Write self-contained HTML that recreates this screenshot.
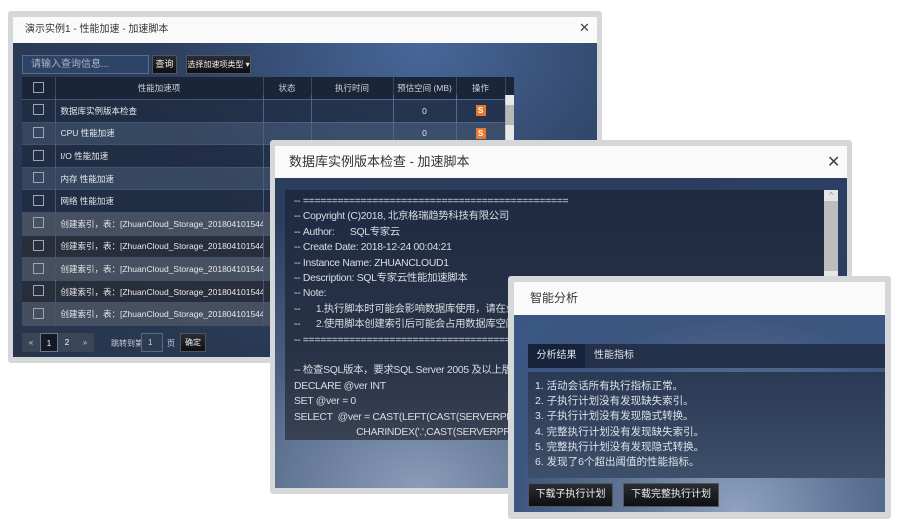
<!DOCTYPE html>
<html><head><meta charset="utf-8"><style>
*{margin:0;padding:0;box-sizing:border-box}
body{width:900px;height:530px;background:#fff;position:relative;overflow:hidden;font-family:"Liberation Sans","Noto Sans CJK SC",sans-serif}
.abs{position:absolute}
.win{position:absolute;background:#d6d7d9;border-radius:3px}
.hdr{position:absolute;background:#fafafa;color:#333}
.body{position:absolute;background:radial-gradient(ellipse at 70% 0%,#48679a 0%,#2c3f5e 45%,#27344a 100%)}
.x{position:absolute;color:#444;font-size:16px}
table{border-collapse:collapse;font-size:8.5px;color:#e6e9ee;table-layout:fixed}
td{height:22.6px;border-right:1px solid rgba(120,140,170,.35);border-bottom:1px solid rgba(120,140,170,.3);overflow:hidden;white-space:nowrap}
.cb{display:inline-block;width:11px;height:11px;border:1px solid #9aa6b6}
.s{display:inline-block;width:10px;height:11px;background:#e8782e;color:#fff;font-size:8px;font-weight:bold;line-height:11px;text-align:center}
.btn{position:absolute;background:linear-gradient(#2a2d33,#0d0f12);color:#eee;text-align:center;border:1px solid #555;white-space:nowrap;overflow:hidden}
</style></head><body>

<!-- window 1 -->
<div class="win" style="left:8px;top:11px;width:594px;height:352px"></div>
<div class="hdr" style="left:13px;top:17px;width:584px;height:26px;font-size:10px;line-height:26px;padding-left:12px">演示实例1 - 性能加速 - 加速脚本</div>
<div class="x" style="left:579px;top:20px;font-size:13px">✕</div>
<div class="body" style="left:13px;top:43px;width:584px;height:314px"></div>
<div class="abs" style="left:22px;top:55px;width:127px;height:19px;background:#2e4466;border:1px solid #566d90;color:#aab5c6;font-size:10px;line-height:17px;padding-left:8px">请输入查询信息...</div>
<div class="btn" style="left:152px;top:55px;width:25px;height:19px;font-size:9px;line-height:17px">查询</div>
<div class="btn" style="left:186px;top:55px;width:65px;height:19px;font-size:8px;line-height:17px">选择加速项类型 ▾</div>
<div class="abs" style="left:22px;top:77px;width:492px;height:18px;background:#1b2538"></div>
<div class="abs" style="left:505px;top:95px;width:9px;height:227px;background:#e8e8e8"><div style="margin-top:10px;height:20px;background:#b8b8b8"></div></div>
<table class="abs" style="left:22px;top:77px;width:483px">
<colgroup><col style="width:33px"><col style="width:208px"><col style="width:48px"><col style="width:82px"><col style="width:63px"><col style="width:49px"></colgroup>
<tr style="background:#1b2538;color:#cdd3dc"><td style="height:18px;text-align:center"><span class="cb"></span></td><td style="text-align:center">性能加速项</td><td style="text-align:center">状态</td><td style="text-align:center">执行时间</td><td style="text-align:center">预估空间 (MB)</td><td style="text-align:center">操作</td></tr>
<tr style="background:rgba(30,42,62,.75)"><td align="center"><span class="cb"></span></td><td style="padding-left:5px">数据库实例版本检查</td><td></td><td></td><td align="center">0</td><td align="center"><span class="s">S</span></td></tr>
<tr style="background:rgba(60,75,98,.7)"><td align="center"><span class="cb"></span></td><td style="padding-left:5px">CPU 性能加速</td><td></td><td></td><td align="center">0</td><td align="center"><span class="s">S</span></td></tr>
<tr style="background:rgba(30,42,62,.75)"><td align="center"><span class="cb"></span></td><td style="padding-left:5px">I/O 性能加速</td><td></td><td></td><td></td><td></td></tr>
<tr style="background:rgba(60,75,98,.7)"><td align="center"><span class="cb"></span></td><td style="padding-left:5px">内存 性能加速</td><td></td><td></td><td></td><td></td></tr>
<tr style="background:rgba(30,42,62,.75)"><td align="center"><span class="cb"></span></td><td style="padding-left:5px">网络 性能加速</td><td></td><td></td><td></td><td></td></tr>
<tr style="background:rgba(80,88,100,.75)"><td align="center"><span class="cb"></span></td><td style="padding-left:5px">创建索引，表：[ZhuanCloud_Storage_201804101544001</td><td></td><td></td><td></td><td></td></tr>
<tr style="background:rgba(40,44,52,.8)"><td align="center"><span class="cb"></span></td><td style="padding-left:5px">创建索引，表：[ZhuanCloud_Storage_201804101544001</td><td></td><td></td><td></td><td></td></tr>
<tr style="background:rgba(80,88,100,.75)"><td align="center"><span class="cb"></span></td><td style="padding-left:5px">创建索引，表：[ZhuanCloud_Storage_201804101544001</td><td></td><td></td><td></td><td></td></tr>
<tr style="background:rgba(40,44,52,.8)"><td align="center"><span class="cb"></span></td><td style="padding-left:5px">创建索引，表：[ZhuanCloud_Storage_201804101544001</td><td></td><td></td><td></td><td></td></tr>
<tr style="background:rgba(80,88,100,.75)"><td align="center"><span class="cb"></span></td><td style="padding-left:5px">创建索引，表：[ZhuanCloud_Storage_201804101544001</td><td></td><td></td><td></td><td></td></tr>
</table>
<div class="abs" style="left:22px;top:333px;width:72px;height:19px;background:#3a4658;font-size:8px;color:#ccc;line-height:19px">
<span style="position:absolute;left:0;width:18px;text-align:center">«</span>
<span style="position:absolute;left:18px;width:18px;height:19px;text-align:center;background:#141a24;color:#fff;border:1px solid #6a7a90">1</span>
<span style="position:absolute;left:36px;width:18px;text-align:center;color:#fff">2</span>
<span style="position:absolute;left:54px;width:18px;text-align:center">»</span></div>
<div class="abs" style="left:111px;top:338px;font-size:8px;color:#ccd">跳转到第</div>
<div class="abs" style="left:141px;top:333px;width:22px;height:19px;border:1px solid #5a6a80;background:#2e3c52;color:#ccd;font-size:8px;line-height:17px;padding-left:6px">1</div>
<div class="abs" style="left:167px;top:338px;font-size:8px;color:#ccd">页</div>
<div class="btn" style="left:180px;top:333px;width:26px;height:19px;font-size:8px;line-height:17px">确定</div>

<!-- window 2 -->
<div class="win" style="left:270px;top:140px;width:582px;height:354px"></div>
<div class="hdr" style="left:275px;top:146px;width:572px;height:32px;font-size:13px;line-height:32px;padding-left:14px">数据库实例版本检查 - 加速脚本</div>
<div class="x" style="left:827px;top:152px">✕</div>
<div class="body" style="left:275px;top:178px;width:572px;height:310px;background:radial-gradient(ellipse at 25% 100%,#8a9cb8 0%,#4a5f80 35%,#2c3e5c 65%,#2b3f62 100%)"></div>
<div class="abs" style="left:285px;top:190px;width:539px;height:250px;background:linear-gradient(#1e2a42,#2a3448 70%,#3a4254);overflow:hidden;color:#d9dde4;font-size:10.4px;letter-spacing:-0.3px;line-height:15.4px;padding:4px 0 0 9px;white-space:pre">-- ==============================================
-- Copyright (C)2018, 北京格瑞趋势科技有限公司
-- Author:      SQL专家云
-- Create Date: 2018-12-24 00:04:21
-- Instance Name: ZHUANCLOUD1
-- Description: SQL专家云性能加速脚本
-- Note:
--      1.执行脚本时可能会影响数据库使用，请在业务低峰期执行
--      2.使用脚本创建索引后可能会占用数据库空间
-- ==============================================

-- 检查SQL版本，要求SQL Server 2005 及以上版本
DECLARE @ver INT
SET @ver = 0
SELECT  @ver = CAST(LEFT(CAST(SERVERPROPERTY('ProductVersion') AS NVARCHAR)
                        CHARINDEX('.',CAST(SERVERPROPERTY</div>
<div class="abs" style="left:824px;top:190px;width:14px;height:250px;background:#e6e6e6"><div style="color:#999;font-size:9px;text-align:center">^</div><div style="height:70px;background:#bdbdbd;margin-top:1px"></div></div>

<!-- window 3 -->
<div class="win" style="left:508px;top:276px;width:383px;height:243px"></div>
<div class="hdr" style="left:514px;top:282px;width:371px;height:33px;font-size:12px;line-height:33px;padding-left:16px">智能分析</div>
<div class="body" style="left:514px;top:315px;width:371px;height:197px;background:radial-gradient(ellipse at 60% 100%,#8fa3c0 0%,#5b7092 40%,#3d5680 70%,#3a5784 100%)"></div>
<div class="abs" style="left:528px;top:344px;width:357px;height:24px;background:#22304a"></div>
<div class="abs" style="left:528px;top:344px;width:57px;height:24px;background:#16213a;color:#e0e4ea;font-size:10px;line-height:24px;text-align:center">分析结果</div>
<div class="abs" style="left:594px;top:344px;color:#e0e4ea;font-size:10px;line-height:24px">性能指标</div>
<div class="abs" style="left:528px;top:372px;width:357px;height:106px;background:linear-gradient(#2a3a55,#3e4f6a);color:#dfe3ea;font-size:10.5px;line-height:15.2px;padding:7px 0 0 7px">1. 活动会话所有执行指标正常。<br>2. 子执行计划没有发现缺失索引。<br>3. 子执行计划没有发现隐式转换。<br>4. 完整执行计划没有发现缺失索引。<br>5. 完整执行计划没有发现隐式转换。<br>6. 发现了6个超出阈值的性能指标。</div>
<div class="btn" style="left:528px;top:483px;width:85px;height:24px;font-size:10px;line-height:22px">下载子执行计划</div>
<div class="btn" style="left:623px;top:483px;width:96px;height:24px;font-size:10px;line-height:22px">下载完整执行计划</div>
</body></html>
